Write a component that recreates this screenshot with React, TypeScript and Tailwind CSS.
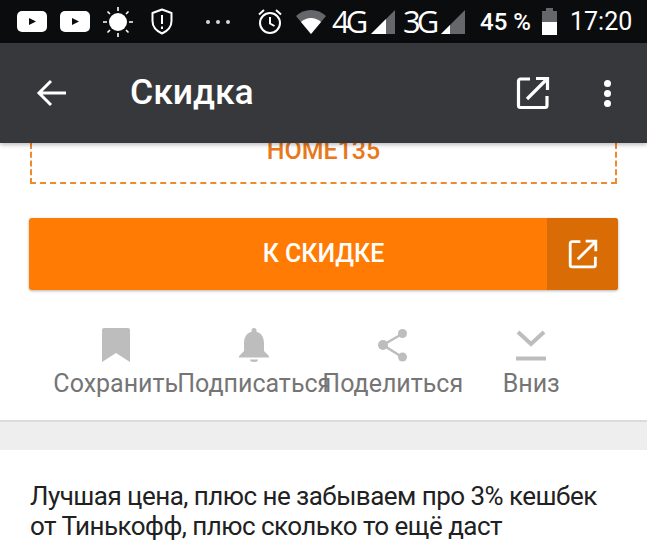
import type { ReactNode } from 'react'

function ExternalIcon({ className }: { className: string }) {
  return (
    <svg viewBox="0 0 34 34" className={className} fill="none" stroke="currentColor" strokeWidth="3.2">
      <path d="M14 3H4.500A2 2 0 0 0 2.500 5v24.500a2 2 0 0 0 2 2H29a2 2 0 0 0 2-2V20" strokeLinejoin="round" />
      <path d="M20 2.500h11.500V14" />
      <path d="M31 3L11 23" />
    </svg>
  )
}

function Youtube({ className }: { className: string }) {
  return (
    <svg viewBox="0 0 30 21" className={className}>
      <rect width="30" height="21" rx="5" fill="#fff" />
      <path d="M12 7l7 3.500-7 3.500z" fill="#0b0c0e" />
    </svg>
  )
}

function Signal({ level, className }: { level: number; className: string }) {
  return (
    <svg viewBox="0 0 24 24" className={className}>
      <path d="M24 0v24H0z" fill="#66676a" />
      <path d={level === 2 ? 'M15 9v15H0z' : 'M9 15v9H0z'} fill="#fff" />
    </svg>
  )
}

function StatusBar() {
  return (
    <div className="h-[43px] shrink-0 bg-[#0b0c0e] flex items-center text-white pl-[17px]">
      <Youtube className="w-[30px] h-[21px]" />
      <Youtube className="w-[30px] h-[21px] ml-[13px]" />
      <svg viewBox="0 0 32 32" className="w-[32px] h-[32px] ml-[12px]" stroke="#fff" strokeWidth="1.6">
        <circle cx="16" cy="16" r="9" fill="#fff" stroke="none" />
        <path d="M16 1v4M16 27v4M1 16h4M27 16h4M5.500 5.500l2.500 2.500M24 24l2.500 2.500M5.500 26.500L8 24M24 8l2.500-2.500" />
      </svg>
      <svg viewBox="0 0 22 27" className="w-[22px] h-[27px] ml-[17px]" fill="none" stroke="#fff" strokeWidth="2">
        <path d="M11 1.500l9.500 3.500v8c0 6-4 10-9.500 12.500C5.500 23 1.500 19 1.500 13V5z" strokeLinejoin="round" />
        <path d="M11 7v9M11 18.500v2.500" />
      </svg>
      <div className="flex gap-[6px] ml-[33px]">
        <span className="w-[4px] h-[4px] rounded-full bg-[#d8d8d8]" />
        <span className="w-[4px] h-[4px] rounded-full bg-[#d8d8d8]" />
        <span className="w-[4px] h-[4px] rounded-full bg-[#d8d8d8]" />
      </div>
      <svg viewBox="0 0 26 27" className="w-[26px] h-[27px] ml-[27px]" fill="none" stroke="#fff" strokeWidth="2">
        <circle cx="13" cy="15" r="10" />
        <path d="M13 9v6.500l4.500 2.500M2 6.500L7 2M24 6.500L19 2" />
      </svg>
      <svg viewBox="0 0 30 24" className="w-[30px] h-[24px] ml-[13px]">
        <path d="M0 6C8-2 22-2 30 6L15 24z" fill="#66676a" />
        <path d="M5 12C11 6.500 19 6.500 25 12L15 24z" fill="#fff" />
      </svg>
      <span className="ml-[6px] w-[33px] text-[31px] leading-none font-normal font-['Open_Sans'] tracking-[-4px]">4G</span>
      <Signal level={2} className="w-[24px] h-[24px] ml-[6px]" />
      <span className="ml-[8px] w-[32px] text-[31px] leading-none font-normal font-['Open_Sans'] tracking-[-4px]">3G</span>
      <Signal level={1} className="w-[24px] h-[24px] ml-[6px]" />
      <span className="ml-[15px] w-[53px] whitespace-nowrap text-[24px] leading-none font-['Roboto'] font-medium">45 %</span>
      <div className="ml-[9px] w-[15px] h-[27px] flex flex-col items-center">
        <div className="w-[7px] h-[3px] bg-[#66676a]" />
        <div className="w-[15px] h-[11px] bg-[#66676a]" />
        <div className="w-[15px] h-[13px] bg-white" />
      </div>
      <span className="ml-[13px] text-[25px] leading-none font-['Roboto']">17:20</span>
    </div>
  )
}

function Header() {
  return (
    <div className="h-[100px] shrink-0 bg-[#37383c] flex items-center text-white relative z-10 shadow-[0_2px_4px_rgba(0,0,0,0.25)] pl-[36px]">
      <svg viewBox="0 0 30 28" className="w-[30px] h-[28px]" fill="none" stroke="#fff" strokeWidth="3">
        <path d="M30 14H3M15 2L3 14l12 12" />
      </svg>
      <span className="ml-[64px] text-[35.5px] font-['Roboto'] font-medium leading-none">Скидка</span>
      <ExternalIcon className="w-[34px] h-[34px] ml-auto" />
      <div className="ml-[54px] mr-[36px] flex flex-col gap-[3px]">
        <span className="w-[7px] h-[7px] rounded-full bg-white" />
        <span className="w-[7px] h-[7px] rounded-full bg-white" />
        <span className="w-[7px] h-[7px] rounded-full bg-white" />
      </div>
    </div>
  )
}

function Action({ label, children }: { label: string; children: ReactNode }) {
  return (
    <div className="w-[138.5px] flex flex-col items-center">
      <div className="h-[40px] flex items-center justify-center">{children}</div>
      <span className="mt-[5px] text-[25px] leading-[28px] text-[#757575] whitespace-nowrap font-['Roboto']">{label}</span>
    </div>
  )
}

export default function App() {
  return (
    <div className="w-[647px] h-[545px] overflow-hidden bg-white flex flex-col font-['Roboto']">
      <StatusBar />
      <Header />
      <div className="mx-[30px] h-[41px] shrink-0 border-2 border-t-0 border-dashed border-[#f08a2c] flex justify-center">
        <span className="text-[25px] leading-[16px] font-medium text-[#e8781a]">HOME135</span>
      </div>
      <div className="mx-[29px] mt-[34px] h-[72px] shrink-0 rounded-[3px] bg-[#ff7b03] flex text-white shadow-[0_1px_3px_rgba(0,0,0,0.3)] overflow-hidden">
        <div className="flex-1 pl-[71px] flex items-center justify-center text-[25px] font-medium">К СКИДКЕ</div>
        <div className="w-[71px] bg-[#da6c05] flex items-center justify-center">
          <ExternalIcon className="w-[30px] h-[30px]" />
        </div>
      </div>
      <div className="flex justify-center pt-[35px] h-[132px] shrink-0 border-b-2 border-[#dcdcdc]">
        <Action label="Сохранить">
          <svg viewBox="0 0 28 34" className="w-[28px] h-[34px]">
            <path d="M0 2a2 2 0 0 1 2-2h24a2 2 0 0 1 2 2v32L14 25 0 34z" fill="#bdbdbd" />
          </svg>
        </Action>
        <Action label="Подписаться">
          <svg viewBox="0 0 30 34" className="w-[30px] h-[34px]" fill="#bdbdbd">
            <path d="M15 0a2.500 2.500 0 0 1 2.500 2.500v1.200C22.500 5 25 9.500 25 15v8l5 5v1.500H0V28l5-5v-8c0-5.500 2.500-10 7.500-11.300V2.500A2.500 2.500 0 0 1 15 0z" />
            <path d="M11 31.500h8a4 2.500 0 0 1-8 0z" />
          </svg>
        </Action>
        <Action label="Поделиться">
          <svg viewBox="0 0 32 34" className="w-[32px] h-[34px]" fill="none" stroke="#bdbdbd" strokeWidth="2.500">
            <circle cx="25.500" cy="5.500" r="4.500" stroke="none" fill="#bdbdbd" />
            <circle cx="6" cy="17" r="5" stroke="none" fill="#bdbdbd" />
            <circle cx="25.500" cy="29" r="4.500" stroke="none" fill="#bdbdbd" />
            <path d="M25 6L6 17l19 12" />
          </svg>
        </Action>
        <Action label="Вниз">
          <svg viewBox="0 0 30 32" className="w-[30px] h-[32px]" fill="none" stroke="#bdbdbd" strokeWidth="4">
            <path d="M2 3l13 12L28 3" />
            <path d="M0 29.500h30" />
          </svg>
        </Action>
      </div>
      <div className="h-[28px] shrink-0 bg-[#eeeeee]" />
      <p className="px-[30px] pt-[31px] text-[26px] tracking-[-0.53px] leading-[30px] text-[#212121] whitespace-nowrap">
        Лучшая цена, плюс не забываем про 3% кешбек
        <br />
        от Тинькофф, плюс сколько то ещё даст
        <br />
        кешбэк сервис бонусами, бывает так
      </p>
    </div>
  )
}
